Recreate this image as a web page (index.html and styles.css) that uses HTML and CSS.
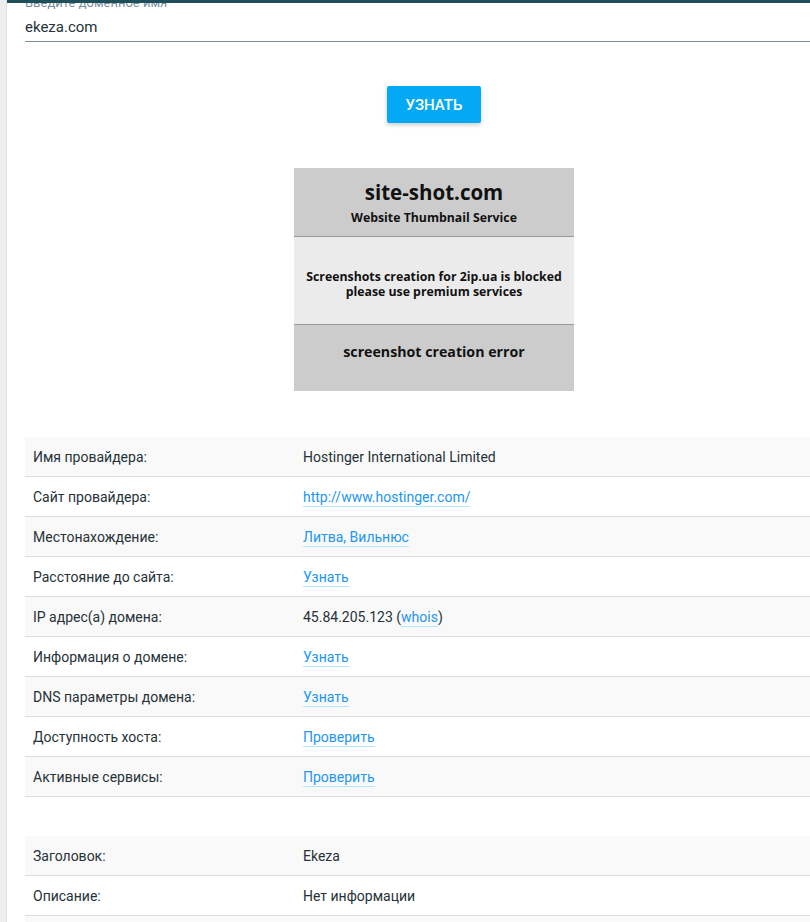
FILE: index.html
```html
<!DOCTYPE html>
<html lang="ru">
<head>
    <meta charset="UTF-8">
    <meta name="viewport" content="width=device-width, initial-scale=1.0">
    <title>Информация о сайте</title>
    <link rel="stylesheet" href="styles.css">
</head>
<body>
    <div class="header-edge"></div>

    <div class="layout">
        <aside class="sidebar"></aside>

        <main class="content">
            <!-- Domain form -->
            <form class="domain-form" onsubmit="return false;">
                <label class="field-label" for="domain">Введите доменное имя</label>
                <input class="field-input" id="domain" type="text" value="ekeza.com">
                <div class="form-actions">
                    <button class="btn" type="submit">Узнать</button>
                </div>
            </form>

            <!-- Thumbnail from the screenshot service -->
            <div class="thumb">
                <div class="thumb-head">
                    <div class="thumb-title">site-shot.com</div>
                    <div class="thumb-sub">Website Thumbnail Service</div>
                </div>
                <div class="thumb-body">
                    Screenshots creation for 2ip.ua is blocked<br>
                    please use premium services
                </div>
                <div class="thumb-foot">screenshot creation error</div>
            </div>

            <table class="info-table">
                <tbody>
                    <tr>
                        <td>Имя провайдера:</td>
                        <td>Hostinger International Limited</td>
                    </tr>
                    <tr>
                        <td>Сайт провайдера:</td>
                        <td><a class="link" href="#">http://www.hostinger.com/</a></td>
                    </tr>
                    <tr>
                        <td>Местонахождение:</td>
                        <td><a class="link" href="#">Литва, Вильнюс</a></td>
                    </tr>
                    <tr>
                        <td>Расстояние до сайта:</td>
                        <td><a class="link" href="#">Узнать</a></td>
                    </tr>
                    <tr>
                        <td>IP адрес(а) домена:</td>
                        <td>45.84.205.123 (<a class="link" href="#">whois</a>)</td>
                    </tr>
                    <tr>
                        <td>Информация о домене:</td>
                        <td><a class="link" href="#">Узнать</a></td>
                    </tr>
                    <tr>
                        <td>DNS параметры домена:</td>
                        <td><a class="link" href="#">Узнать</a></td>
                    </tr>
                    <tr>
                        <td>Доступность хоста:</td>
                        <td><a class="link" href="#">Проверить</a></td>
                    </tr>
                    <tr>
                        <td>Активные сервисы:</td>
                        <td><a class="link" href="#">Проверить</a></td>
                    </tr>
                </tbody>
            </table>

            <table class="info-table">
                <tbody>
                    <tr>
                        <td>Заголовок:</td>
                        <td>Ekeza</td>
                    </tr>
                    <tr>
                        <td>Описание:</td>
                        <td>Нет информации</td>
                    </tr>
                    <tr>
                        <td>Ключевые слова:</td>
                        <td>Нет информации</td>
                    </tr>
                </tbody>
            </table>
        </main>
    </div>
</body>
</html>
```

FILE: styles.css
```css
html,
body {
    margin: 0;
    overflow: hidden;
}

body {
    font-family: Roboto, "Liberation Sans", sans-serif;
    font-size: 14px;
    color: #263238;
    background-color: #fff;
}

/* bottom edge of the fixed site header */
.header-edge {
    position: fixed;
    top: 0;
    left: 7px;
    right: 0;
    height: 3px;
    background-color: #1f4f5a;
    z-index: 10;
}

.layout {
    display: flex;
    min-height: 100vh;
}

.sidebar {
    flex: 0 0 6px;
    background-color: #eeeeee;
    border-right: 1px solid #e2e2e2;
}

.content {
    flex: 0 0 818px;
    padding-left: 18px;
    margin-top: -5px;
}

.domain-form {
    display: flex;
    flex-direction: column;
}

.field-label {
    font-size: 13px;
    line-height: 16px;
    color: #78909c;
}

.field-input {
    font-family: inherit;
    font-size: 15px;
    color: #263238;
    height: 28px;
    padding: 2px 0 0;
    border: none;
    border-bottom: 1px solid #78909c;
    outline: none;
    background: transparent;
}

.form-actions {
    display: flex;
    justify-content: center;
    padding-top: 44px;
}

.btn {
    width: 94px;
    height: 37px;
    padding: 0;
    font-family: inherit;
    font-size: 15px;
    font-weight: 500;
    text-transform: uppercase;
    color: #fff;
    background-color: #03a9f4;
    border: none;
    border-radius: 2px;
    box-shadow: 0 2px 4px rgba(0, 0, 0, 0.2);
    cursor: pointer;
}

.thumb {
    width: 280px;
    margin: 45px auto 46px;
    font-family: "Open Sans", "DejaVu Sans", sans-serif;
    font-weight: 700;
    color: #111;
    text-align: center;
}

.thumb-head {
    height: 68px;
    background-color: #cccccc;
    border-bottom: 1px solid #9a9a9a;
    display: flex;
    flex-direction: column;
    justify-content: center;
}

.thumb-title {
    font-size: 20.5px;
    line-height: 24px;
}

.thumb-sub {
    font-size: 12.3px;
    line-height: 15px;
    margin-top: 6px;
}

.thumb-body {
    height: 81px;
    padding-top: 6px;
    background-color: #ebebeb;
    border-bottom: 1px solid #9a9a9a;
    display: flex;
    flex-direction: column;
    justify-content: center;
    font-size: 12.3px;
    line-height: 15px;
}

.thumb-foot {
    height: 66px;
    background-color: #cccccc;
    font-size: 14.2px;
    line-height: 54px;
}

.info-table {
    width: 100%;
    border-collapse: collapse;
    margin-bottom: 39px;
}

.info-table td {
    height: 39px;
    padding: 0 8px;
    text-align: left;
    border-bottom: 1px solid #dddddd;
}

.info-table td:first-child {
    width: 254px;
}

.info-table tr:nth-child(odd) {
    background-color: #f9f9f9;
}

.link {
    color: #2196f3;
    text-decoration: none;
    border-bottom: 1px solid #b3e5fc;
    padding-bottom: 1px;
}
```
